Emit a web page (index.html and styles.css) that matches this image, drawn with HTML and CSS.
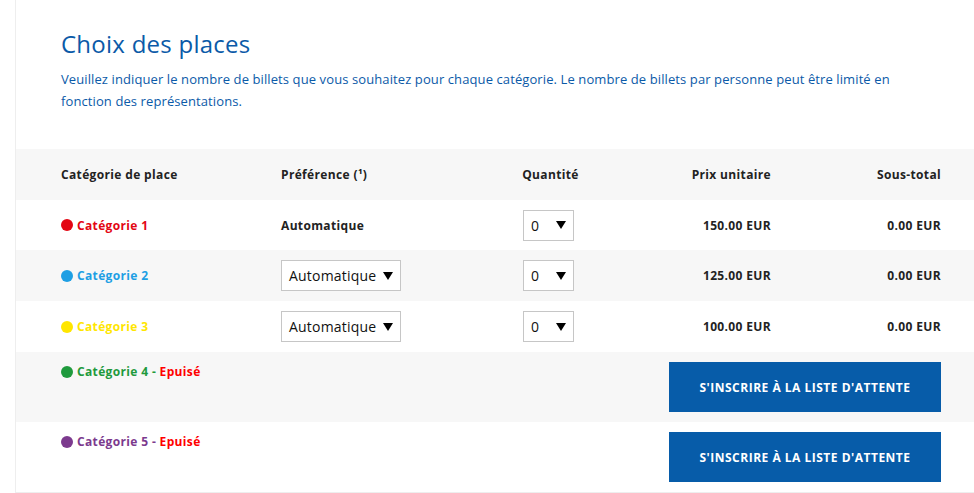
FILE: index.html
```html
<!DOCTYPE html>
<html lang="fr">
<head>
<meta charset="utf-8">
<title>Choix des places</title>
<link rel="stylesheet" href="styles.css">
</head>
<body>
<div class="page">
  <div class="intro">
    <h1 class="title">Choix des places</h1>
    <p class="lead">Veuillez indiquer le nombre de billets que vous souhaitez pour chaque catégorie. Le nombre de billets par personne peut être limité en fonction des représentations.</p>
  </div>
  <div class="table">
    <div class="row head">
      <div class="c-cat">Catégorie de place</div>
      <div class="c-pref">Préférence (¹)</div>
      <div class="c-qty">Quantité</div>
      <div class="c-price">Prix unitaire</div>
      <div class="c-sub">Sous-total</div>
    </div>
    <div class="row first">
      <div class="c-cat cat cat1"><span class="dot"></span>Catégorie 1</div>
      <div class="c-pref strong">Automatique</div>
      <div class="c-qty"><div class="sel sel-qty"><span>0</span><span class="arrow"></span></div></div>
      <div class="c-price strong">150.00 EUR</div>
      <div class="c-sub strong">0.00 EUR</div>
    </div>
    <div class="row alt">
      <div class="c-cat cat cat2"><span class="dot"></span>Catégorie 2</div>
      <div class="c-pref"><div class="sel sel-pref"><span>Automatique</span><span class="arrow"></span></div></div>
      <div class="c-qty"><div class="sel sel-qty"><span>0</span><span class="arrow"></span></div></div>
      <div class="c-price strong">125.00 EUR</div>
      <div class="c-sub strong">0.00 EUR</div>
    </div>
    <div class="row">
      <div class="c-cat cat cat3"><span class="dot"></span>Catégorie 3</div>
      <div class="c-pref"><div class="sel sel-pref"><span>Automatique</span><span class="arrow"></span></div></div>
      <div class="c-qty"><div class="sel sel-qty"><span>0</span><span class="arrow"></span></div></div>
      <div class="c-price strong">100.00 EUR</div>
      <div class="c-sub strong">0.00 EUR</div>
    </div>
    <div class="row alt soldout">
      <div class="c-cat cat cat4"><span class="dot"></span>Catégorie 4 - <span class="epuise">Epuisé</span></div>
      <div class="c-action"><button class="btn">S'inscrire à la liste d'attente</button></div>
    </div>
    <div class="row soldout">
      <div class="c-cat cat cat5"><span class="dot"></span>Catégorie 5 - <span class="epuise">Epuisé</span></div>
      <div class="c-action"><button class="btn">S'inscrire à la liste d'attente</button></div>
    </div>
  </div>
</div>
</body>
</html>
```

FILE: styles.css
```css
html, body {
  margin: 0;
  padding: 0;
  background: #ffffff;
}
body {
  font-family: "Open Sans", "DejaVu Sans", sans-serif;
  color: #222222;
}
.page {
  margin-left: 15px;
  border-left: 1px solid #eeeeee;
  border-bottom: 1px solid #eeeeee;
}
.intro {
  padding: 29px 45px 37px 45px;
}
.title {
  margin: 0;
  font-size: 24px;
  font-weight: 400;
  line-height: 30px;
  letter-spacing: 0.25px;
  color: #0b5aa8;
}
.lead {
  margin: 9px 0 0 0;
  font-size: 13px;
  line-height: 22px;
  letter-spacing: 0.1px;
  color: #0b5aa8;
}
.row {
  display: grid;
  grid-template-columns: 220px 220px 99px 171px 170px;
  align-items: center;
  height: 51px;
  padding: 0 33px 0 45px;
  font-size: 12px;
  letter-spacing: 0.35px;
}
.row.first {
  height: 50px;
}
.row.head, .row.alt {
  background: #f7f7f7;
}
.head {
  font-weight: 700;
}
.c-qty { text-align: center; }
.c-price, .c-sub { text-align: right; }
.strong { font-weight: 700; }
.cat {
  font-weight: 700;
  display: flex;
  align-items: center;
  white-space: pre;
}
.dot {
  width: 12px;
  height: 12px;
  border-radius: 50%;
  margin-right: 4px;
  background: currentColor;
}
.cat1 { color: #e30613; }
.cat2 { color: #1e9fe4; }
.cat3 { color: #ffe600; }
.cat4 { color: #1f9a3d; }
.cat5 { color: #7c3a8e; }
.epuise { color: #ff0000; }
.sel {
  display: inline-flex;
  align-items: center;
  justify-content: space-between;
  box-sizing: border-box;
  height: 31px;
  border: 1px solid #c6c6c6;
  background: #ffffff;
  font-size: 14px;
  letter-spacing: 0.2px;
  color: #111111;
  text-align: left;
}
.sel-pref {
  width: 120px;
  padding: 0 7px 0 7px;
}
.sel-qty {
  width: 51px;
  padding: 0 7px 0 7px;
  margin-left: -4px;
}
.arrow {
  width: 0;
  height: 0;
  border-left: 5.5px solid transparent;
  border-right: 5.5px solid transparent;
  border-top: 8px solid #000000;
}
.row.soldout {
  height: 70px;
  align-items: start;
  grid-template-columns: 539px 341px;
}
.soldout .c-cat {
  padding-top: 11px;
}
.c-action {
  display: flex;
  justify-content: flex-end;
  padding-top: 10px;
}
.btn {
  width: 272px;
  height: 50px;
  border: 0;
  background: #075ca9;
  color: #ffffff;
  font-family: "Open Sans", "DejaVu Sans", sans-serif;
  font-weight: 700;
  font-size: 12px;
  letter-spacing: 0.5px;
  text-transform: uppercase;
  cursor: pointer;
}
```
